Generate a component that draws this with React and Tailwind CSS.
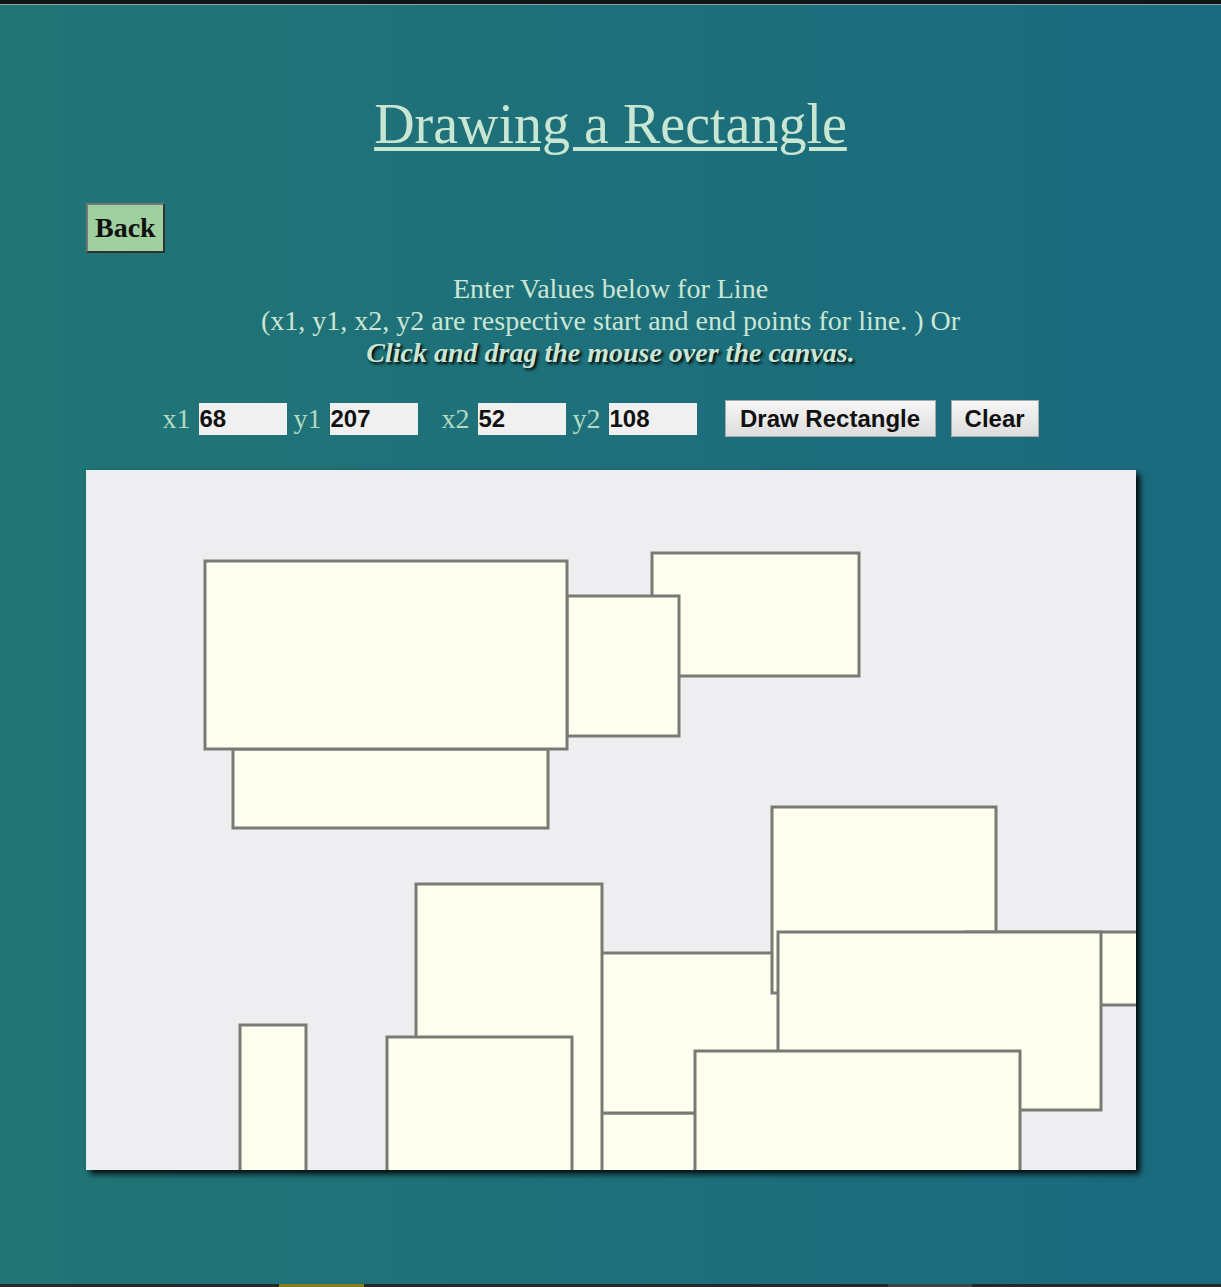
const rects = [
  // drawn in order, later ones sit on top
  { x: 566, y: 83, w: 207, h: 123 },
  { x: 481, y: 126, w: 112, h: 140 },
  { x: 147, y: 279, w: 315, h: 79 },
  { x: 119, y: 91, w: 362, h: 188 },
  { x: 500, y: 643, w: 130, h: 120 },
  { x: 470, y: 483, w: 230, h: 160 },
  { x: 330, y: 414, w: 186, h: 350 },
  { x: 301, y: 567, w: 185, h: 200 },
  { x: 686, y: 337, w: 224, h: 186 },
  { x: 880, y: 462, w: 220, h: 73 },
  { x: 692, y: 462, w: 323, h: 178 },
  { x: 609, y: 581, w: 325, h: 200 },
  { x: 154, y: 555, w: 66, h: 200 },
];

const Field = ({ label, value, className = '' }) => (
  <div className={`flex items-center ${className}`}>
    <span className="text-[28px] leading-[32px] text-[#b0dac4]">{label}</span>
    <input
      readOnly
      value={value}
      className="ml-[8px] w-[88px] h-[32px] px-[1px] bg-[#f0f0f0] text-[24px] font-bold text-[#111] outline-none"
      style={{ fontFamily: "'Liberation Sans', Arial, sans-serif" }}
    />
  </div>
);

const App = () => {
  return (
    <div
      className="h-[1287px] flex flex-col bg-linear-to-r from-[#217575] to-[#1a6a7f] overflow-hidden"
      style={{ fontFamily: "'Liberation Serif', 'Times New Roman', serif" }}
    >
      {/* window chrome strip */}
      <div className="h-[4px] bg-[#121416]" />
      <div className="h-px bg-[#8fa3a6]" />

      <main className="flex-1 w-[1050px] mx-auto pt-[87px]">
        <h1 className="text-center text-[56px] leading-[64px] font-normal text-[#c9e6d3] underline decoration-4 underline-offset-4">
          Drawing a Rectangle
        </h1>

        <button className="mt-[47px] block px-[7.5px] py-[7px] bg-[#a0d0a0] border-2 border-t-[#707a75] border-l-[#707a75] border-r-[#2c3431] border-b-[#2c3431] text-[28px] leading-[32px] font-bold text-[#111]">
          Back
        </button>

        <div className="mt-[20px] text-center text-[28px] leading-[32px] text-[#cbe6d4]">
          <p>Enter Values below for Line</p>
          <p>(x1, y1, x2, y2 are respective start and end points for line. ) Or</p>
          <p className="font-bold italic [text-shadow:2px_2px_3px_#000]">
            Click and drag the mouse over the canvas.
          </p>
        </div>

        <div className="mt-[31px] pl-[77px] flex items-center h-[37px]">
          <Field label="x1" value="68" />
          <Field label="y1" value="207" className="ml-[7px]" />
          <Field label="x2" value="52" className="ml-[24px]" />
          <Field label="y2" value="108" className="ml-[7px]" />
          <button
            className="ml-[28px] h-[37px] px-[14.5px] border border-[#a9a9a9] bg-linear-to-b from-[#f6f6f6] to-[#dddddd] text-[24px] font-bold text-[#111]"
            style={{ fontFamily: "'Liberation Sans', Arial, sans-serif" }}
          >
            Draw Rectangle
          </button>
          <button
            className="ml-[15px] h-[37px] px-[13px] border border-[#a9a9a9] bg-linear-to-b from-[#f6f6f6] to-[#dddddd] text-[24px] font-bold text-[#111]"
            style={{ fontFamily: "'Liberation Sans', Arial, sans-serif" }}
          >
            Clear
          </button>
        </div>

        <div className="mt-[33px] w-[1050px] h-[700px] bg-[#eeeef0] shadow-[4px_4px_6px_rgba(0,0,0,0.9)]">
          <svg width="1050" height="700" viewBox="0 0 1050 700" className="block">
            {rects.map((r, i) => (
              <rect
                key={i}
                x={r.x}
                y={r.y}
                width={r.w}
                height={r.h}
                fill="#fffff0"
                stroke="#7a7a75"
                strokeWidth="3"
              />
            ))}
          </svg>
        </div>
      </main>

      {/* taskbar sliver */}
      <div className="h-[3px] flex bg-[#23282a]">
        <div className="w-[279px]" />
        <div className="w-[85px] bg-[#8a7a1c]" />
        <div className="w-[524px]" />
        <div className="w-[84px] bg-[#3a4446]" />
      </div>
    </div>
  );
};

export default App;
